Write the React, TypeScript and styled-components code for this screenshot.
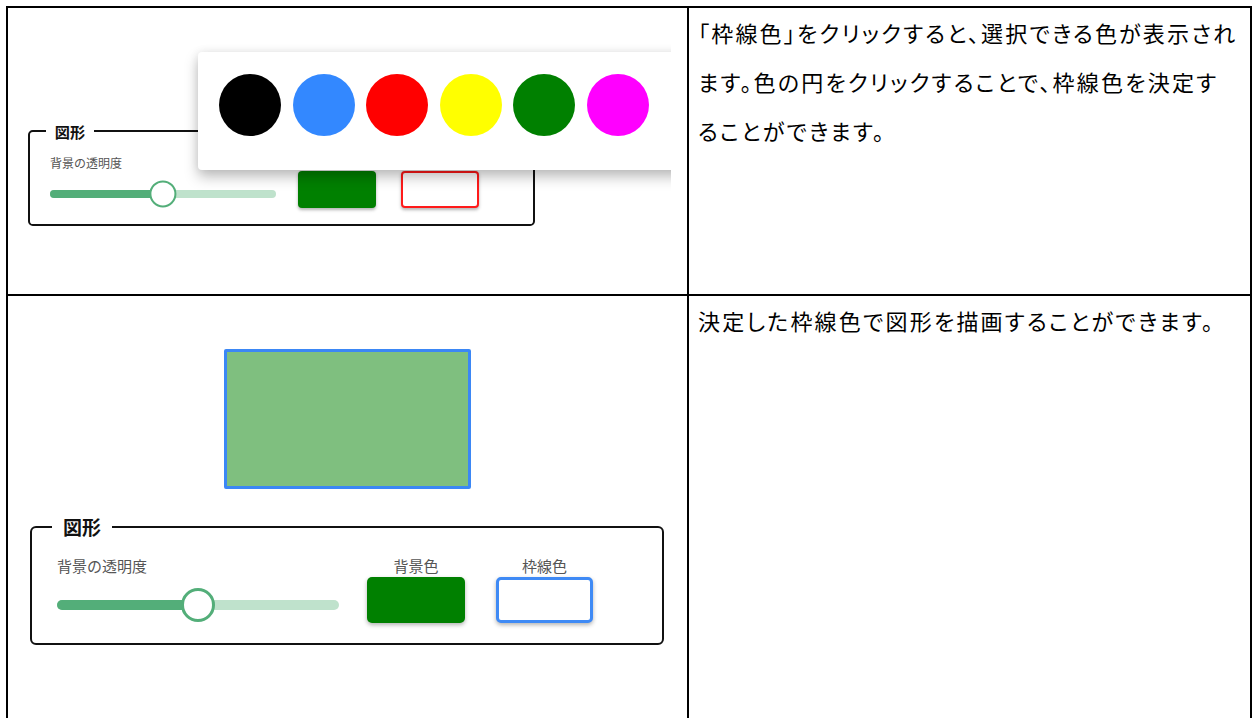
import React from "react";
import styled, { createGlobalStyle } from "styled-components";

const GlobalStyle = createGlobalStyle`
  html, body {
    margin: 0;
    padding: 0;
    background: #fff;
  }
  body {
    font-family: "Noto Sans CJK JP", "Noto Sans", sans-serif;
    color: #000;
  }
`;

const Page = styled.div`
  box-sizing: border-box;
  height: 718px;
  overflow: hidden;
  padding: 6px 0 0 6px;
`;

const Table = styled.div`
  display: grid;
  grid-template-columns: 679px 561px;
  grid-template-rows: 286px 440px;
  gap: 2px;
  padding: 2px;
  width: max-content;
  background: #000;
`;

const PictureCell = styled.div`
  position: relative;
  overflow: hidden;
  background: #fff;
`;

const TextCell = styled.div<{ $top: number }>`
  background: #fff;
  padding: ${(p) => p.$top}px 0 0 9px;
  font-size: 22px;
  line-height: 49px;
  letter-spacing: 2.2px;
  font-feature-settings: "palt";
  white-space: nowrap;
`;

// screenshot of the app, cut off on the right like in the doc
const Shot = styled.div`
  position: relative;
  box-sizing: border-box;
  width: 663px;
  height: 100%;
  overflow: hidden;
  padding: 113px 0 0 20px;
`;

const Canvas = styled.div`
  padding: 53px 0 0 216px;
`;

const DrawnRect = styled.div`
  box-sizing: border-box;
  width: 247px;
  height: 140px;
  border: 3px solid #3b87f5;
  border-radius: 2px;
  background: rgba(0, 128, 0, 0.5);
`;

const PanelSlot = styled.div<{ $top: number; $left: number }>`
  padding: ${(p) => p.$top}px 0 0 ${(p) => p.$left}px;
`;

const Panel = styled.fieldset<{ $scale: number }>`
  zoom: ${(p) => p.$scale};
  box-sizing: border-box;
  width: 634px;
  margin: 0;
  padding: 16px 25px 20px;
  border: 2.5px solid #111;
  border-radius: 6px;
`;

const Legend = styled.legend`
  margin-left: -5px;
  padding: 0 11px;
  font-size: 19px;
  font-weight: 700;
  line-height: 26px;
  color: #111;
`;

const Controls = styled.div`
  display: flex;
  align-items: flex-start;
`;

const Column = styled.div<{ $width: number; $gap?: number }>`
  display: flex;
  flex-direction: column;
  width: ${(p) => p.$width}px;
  margin-left: ${(p) => p.$gap ?? 0}px;
`;

const Label = styled.div<{ $center?: boolean }>`
  font-size: 15px;
  line-height: 20px;
  color: #555;
  text-align: ${(p) => (p.$center ? "center" : "left")};
  white-space: nowrap;
`;

const SliderWrap = styled.div`
  position: relative;
  display: flex;
  align-items: center;
  height: 36px;
  margin-top: 11px;
`;

const Track = styled.div`
  position: relative;
  width: 100%;
  height: 10px;
  border-radius: 5px;
  background: #bfe2cc;
`;

const TrackFill = styled.div`
  height: 100%;
  border-radius: 5px;
  background: #53ae79;
`;

const Thumb = styled.div`
  position: absolute;
  top: 50%;
  box-sizing: border-box;
  width: 34px;
  height: 34px;
  border: 3px solid #53ae79;
  border-radius: 50%;
  background: #fff;
  transform: translate(-50%, -50%);
`;

const Swatch = styled.div<{ $fill?: string; $outline?: string }>`
  box-sizing: border-box;
  height: 46px;
  margin-top: 1px;
  border-radius: 5px;
  background: ${(p) => p.$fill ?? "#fff"};
  border: ${(p) => (p.$outline ? `3px solid ${p.$outline}` : "none")};
  box-shadow: 0 2px 4px rgba(0, 0, 0, 0.3);
`;

const ColorPopup = styled.div`
  position: absolute;
  left: 190px;
  top: 44px;
  display: flex;
  gap: 11.5px;
  width: 480px;
  padding: 22px 0 34px 21px;
  border-radius: 4px;
  background: #fff;
  box-shadow: 0 7px 14px rgba(0, 0, 0, 0.25), 0 0 10px rgba(0, 0, 0, 0.08);
`;

const ColorDot = styled.div<{ $color: string }>`
  flex: none;
  width: 62px;
  height: 62px;
  border-radius: 50%;
  background: ${(p) => p.$color};
`;

const popupColors = ["#000000", "#3388ff", "#ff0000", "#ffff00", "#008000", "#ff00ff"];

const Slider = ({ value }: { value: number }) => (
  <SliderWrap>
    <Track>
      <TrackFill style={{ width: `${value}%` }} />
      <Thumb style={{ left: `${value}%` }} />
    </Track>
  </SliderWrap>
);

const ShapePanel = ({ scale, outline }: { scale: number; outline: string }) => (
  <Panel $scale={scale}>
    <Legend>図形</Legend>
    <Controls>
      <Column $width={282}>
        <Label>背景の透明度</Label>
        <Slider value={50} />
      </Column>
      <Column $width={98} $gap={28}>
        <Label $center>背景色</Label>
        <Swatch $fill="#008000" />
      </Column>
      <Column $width={97} $gap={31}>
        <Label $center>枠線色</Label>
        <Swatch $outline={outline} />
      </Column>
    </Controls>
  </Panel>
);

export default function App() {
  return (
    <Page>
      <GlobalStyle />
      <Table>
        <PictureCell>
          <Shot>
            <ShapePanel scale={0.8} outline="#ff1a1a" />
            <ColorPopup>
              {popupColors.map((c) => (
                <ColorDot key={c} $color={c} />
              ))}
            </ColorPopup>
          </Shot>
        </PictureCell>
        <TextCell $top={0}>
          「枠線色」をクリックすると、選択できる色が表示され
          <br />
          ます。色の円をクリックすることで、枠線色を決定す
          <br />
          ることができます。
        </TextCell>
        <PictureCell>
          <Canvas>
            <DrawnRect />
          </Canvas>
          <PanelSlot $top={25} $left={22}>
            <ShapePanel scale={1} outline="#3f8af5" />
          </PanelSlot>
        </PictureCell>
        <TextCell $top={0}>決定した枠線色で図形を描画することができます。</TextCell>
      </Table>
    </Page>
  );
}
